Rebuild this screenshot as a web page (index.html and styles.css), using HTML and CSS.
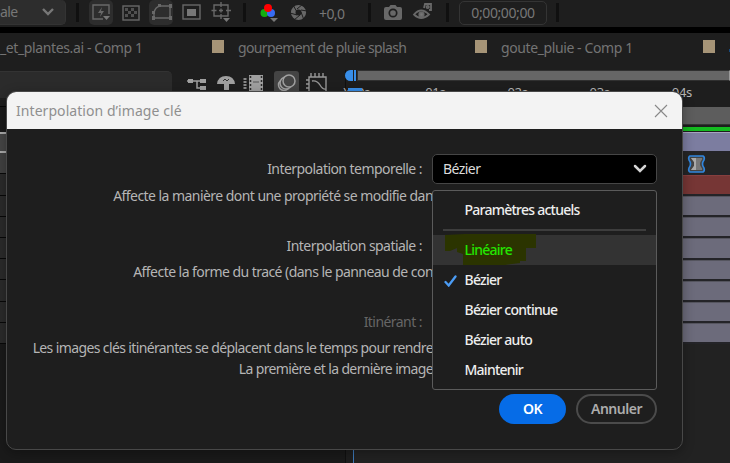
FILE: index.html
```html
<!DOCTYPE html>
<html lang="fr">
<head>
<meta charset="utf-8">
<title>Interpolation d’image clé</title>
<link rel="stylesheet" href="styles.css">
</head>
<body>
<div class="app">
  <header class="toolbar">
    <div class="zoom-select"><span>ale</span>
      <svg width="14" height="10" viewBox="0 0 14 10"><path d="M2 2l5 5 5-5" fill="none" stroke="#777" stroke-width="2.4"/></svg>
    </div>
    <i class="sep s1"></i>
    <svg class="tools" width="150" height="27" viewBox="0 0 150 27" fill="none" stroke="#686868" stroke-width="1.4">
      <rect x="1" y="0" width="24" height="25" rx="5" fill="#2d2d2d" stroke="none"/>
      <path d="M21 14V5H5v14h10"/><path d="M14 7l-4 6h3l-1 4 4-6h-3z" fill="#686868" stroke="none"/><path d="M15 16h7l-3.5 4z" fill="#777" stroke="none"/>
      <rect x="35" y="6" width="16" height="14"/>
      <path d="M37 8h3v3h-3zM43 8h3v3h-3zM40 11h3v3h-3zM46 11h3v3h-3zM37 14h3v3h-3zM43 14h3v3h-3z" fill="#505050" stroke="none"/>
      <rect x="61" y="0" width="24" height="25" rx="5" fill="#2d2d2d" stroke="none"/>
      <path d="M66 18v-5q1-6 6-7h10v12z"/><path d="M64 16h3v4h-3zM81 16h3v4h-3zM81 4h3v4h-3zM70 4h3v3h-3zM64 11h3v3h-3z" fill="#686868" stroke="none"/>
      <rect x="95" y="5" width="17" height="14"/><rect x="99" y="9" width="9" height="7" fill="#777" stroke="none"/>
      <path d="M126 5h14v11h-14zM133 2v5M133 14v5M123.500 10.500h5M138 10.500h5M131 10.500h4M133 8.500v4"/><path d="M135 18h7l-3.500 4z" fill="#777" stroke="none"/>
    </svg>
    <i class="sep s2"></i>
    <svg class="rgb" width="52" height="26" viewBox="0 0 52 26">
      <circle cx="4.500" cy="13" r="4" fill="#12ad12"/><circle cx="11" cy="13" r="4" fill="#376cf3"/><circle cx="8" cy="8" r="4" fill="#f00"/><path d="M10 18h8l-4 4z" fill="#777"/>
      <g fill="none" stroke="#686868"><circle cx="38.500" cy="12.500" r="5.300" stroke-width="4.600"/><path d="M33 5l4 7M43 4l-6 5M47 11l-6-1M44 20l-3-8M34 20l6-5M30 13l7 2" stroke="#1e1e1e" stroke-width="1"/></g>
    </svg>
    <span class="exposure">+0,0</span>
    <i class="sep s3"></i>
    <svg class="cams" width="50" height="24" viewBox="0 0 50 24">
      <path d="M1 7q0-2 2-2h3l1.500-2h5L14 5h3q2 0 2 2v9q0 2-2 2H3q-2 0-2-2z" fill="#686868"/><circle cx="10" cy="11" r="3.700" fill="#686868" stroke="#1e1e1e" stroke-width="1.700"/>
      <g fill="none" stroke="#686868" stroke-width="1.800"><path d="M31 12.500q7-8 15 0-8 7-15 0z"/><circle cx="38.500" cy="12.500" r="2.200" fill="#777"/><path d="M41 6l1-4h6v6h-2"/><circle cx="44.700" cy="5" r="1.200"/></g>
    </svg>
    <i class="sep s4"></i>
    <div class="timecode">0;00;00;00</div>
    <i class="sep s5"></i>
  </header>
  <nav class="tabs">
    <span class="tab t1">_et_plantes.ai - Comp 1</span><i class="swatch"></i>
    <span class="tab t2">gourpement de pluie splash</span><i class="swatch"></i>
    <span class="tab t3">goute_pluie - Comp 1</span><i class="swatch"></i><i class="tick"></i>
  </nav>
  <main class="timeline">
    <section class="layers">
      <div class="layer-tools">
        <div class="search"></div>
        <svg width="146" height="30" viewBox="0 0 146 30">
          <g fill="none" stroke="#a0a0a0" stroke-width="1.500"><path d="M4 11h17M14 11v7h7"/><path d="M5 11h5M17 11h6M17 18h6" stroke-width="4"/></g>
          <path d="M34 14q1-8 9-8t9 8h-6v6h-5v-6z" fill="#a0a0a0"/><path d="M40 11l2-2 2 2 2-2" stroke="#333" fill="none"/>
          <path d="M66 5h14v16H66z" fill="#a0a0a0"/><path d="M67.500 6v15M78.500 6v15" stroke="#2b2b2b" stroke-width="1.500" stroke-dasharray="2 2"/><path d="M70 12h6" stroke="#555"/><path d="M62 8v12" stroke="#888" stroke-width="3" stroke-dasharray="2 1"/>
          <rect x="91" y="1" width="25" height="24" rx="3" fill="#444"/><g fill="#444" stroke="#a0a0a0" stroke-width="1.500"><circle cx="101" cy="15" r="5.500"/><circle cx="103" cy="13" r="6"/><circle cx="106" cy="11" r="6"/></g>
          <path d="M126 21V7h17v14M129 11q5-1 8 4t6 4M128 3v4M132 3v4M136 3v4M140 3v4M123 10h3M123 14h3M123 18h3" fill="none" stroke="#969696" stroke-width="1.400"/>
        </svg>
      </div>
      <div class="layer-head"></div>
      <div class="rows left"><i></i><i></i><i></i><i></i><i></i><i></i><i></i><i></i><i></i><i></i></div>
    </section>
    <section class="tracks">
      <div class="navigator"><i class="nav-start"></i><i class="nav-line"></i><i class="nav-bar"></i></div>
      <div class="ruler"><span>):00s</span><span>01s</span><span>02s</span><span>03s</span><span>04s</span><i class="playhead"></i></div>
      <div class="work-area"></div>
      <div class="cache"></div>
      <div class="rows right"><i></i><i class="keys"><svg width="19" height="18" viewBox="0 0 19 18"><path d="M3 1h13q2 1 1 4-3 4 0 8 1 3-1 4H3q-2-1-1-4 3-4 0-8-1-3 1-4z" fill="#444" stroke="#3186df" stroke-width="1.600"/><path d="M4 3h11q1 1-1 3-2 3 0 6 2 2 1 3H4l3-4V7z" fill="#777"/><path d="M4 3h5v12H4l3-4V7z" fill="#aaa"/></svg></i><i></i><i></i><i></i><i></i><i></i><i></i><i></i><i></i></div>
      <div class="empty"></div>
    </section>
  </main>
</div>

<div class="dialog">
  <header class="titlebar"><span>Interpolation d’image clé</span>
    <svg width="14" height="14" viewBox="0 0 14 14"><path d="M1 1l12 12M13 1L1 13" stroke="#888" stroke-width="1.100"/></svg>
  </header>
  <div class="form">
    <div class="field"><label>Interpolation temporelle :</label>
      <div class="select"><span>Bézier</span><svg width="14" height="10" viewBox="0 0 14 10"><path d="M2 2l5 5 5-5" fill="none" stroke="#d5d5d5" stroke-width="2.500" stroke-linecap="round"/></svg></div>
    </div>
    <p class="d1">Affecte la manière dont une propriété se modifie dan</p>
    <div class="field second"><label class="l2">Interpolation spatiale :</label></div>
    <p class="d2">Affecte la forme du tracé (dans le panneau de con</p>
    <div class="field third"><label class="off">Itinérant :</label></div>
    <p class="d3">Les images clés itinérantes se déplacent dans le temps pour rendre</p>
    <p class="d4">La première et la dernière image</p>
  </div>
  <footer class="actions"><button class="ok">OK</button><button class="cancel">Annuler</button></footer>
  <div class="menu">
    <div class="item first">Paramètres actuels</div>
    <hr>
    <div class="item hover"><svg class="marker" width="91" height="31" viewBox="0 0 91 31"><path d="M0 1L20 0H91V14H81V27H75V29L60 31H18V20L12 18V14L5 17H0z" fill="#2b3400"/></svg><span>Linéaire</span></div>
    <div class="item"><svg class="check" width="13" height="12" viewBox="0 0 13 12"><path d="M1.500 7l3.200 3.500L11.500 1.500" fill="none" stroke="#4b9cf5" stroke-width="2.300" stroke-linecap="round"/></svg>Bézier</div>
    <div class="item cont">Bézier continue</div>
    <div class="item auto">Bézier auto</div>
    <div class="item keep">Maintenir</div>
  </div>
</div>
</body>
</html>
```
FILE: styles.css
```css
* { box-sizing: border-box; }
body { margin: 0; width: 730px; height: 463px; overflow: hidden; position: relative; background: #1e1e1e; font: 14px/20px "Noto Sans", sans-serif; letter-spacing: -0.55px; }
svg { display: block; flex: none; }
i { display: block; flex: none; }
.app { height: 463px; display: flex; flex-direction: column; }
.toolbar { height: 33px; flex: none; display: flex; border-bottom: 6px solid #000; color: #777; }
.zoom-select { width: 66px; height: 25px; background: #2d2d2d; border-radius: 0 5px 5px 0; display: flex; align-items: center; justify-content: space-between; padding-right: 10px; flex: none; border: 1px solid #333; border-width: 0 1px 1px 0; }
.sep { width: 3px; height: 19px; margin-top: 3px; background: #101010; }
.s1 { margin-left: 10px; }
.tools { margin-left: 9px; }
.s2 { margin-left: 5px; }
.rgb { margin-left: 14px; }
.exposure { margin-left: 7px; width: 27px; line-height: 28px; white-space: nowrap; letter-spacing: -0.6px; }
.s3 { margin-left: 22px; }
.cams { margin-left: 12px; margin-top: 2px; }
.s4 { margin-left: 13px; }
.timecode { margin-left: 10px; width: 88px; height: 24px; margin-top: 1px; border: 1px solid #343434; border-radius: 5px; text-align: center; line-height: 22px; letter-spacing: -0.4px; flex: none; }
.s5 { margin-left: 9px; }
.tabs { height: 37px; flex: none; display: flex; align-items: flex-start; color: #747474; padding-top: 5px; }
.tab { white-space: nowrap; flex: none; }
.swatch { width: 12px; height: 13px; margin-top: 2px; background: #a69477; }
.t1 { width: 212px; letter-spacing: -.38px; }
.t2 { width: 245px; padding-left: 8px; margin-left: 6px; letter-spacing: -.63px; }
.t3 { width: 202px; margin-left: 14px; letter-spacing: -.4px; }
.tick { width: 1px; height: 3px; margin: 11px 0 0 14px; background: #174a80; }
.timeline { flex: 1; display: flex; background: #1e1e1e; }
.layers { width: 345px; background: #1a1a1a; flex: none; }
.layer-tools { height: 37px; display: flex; border-bottom: 1px solid #060606; background: #1e1e1e; }
.search { width: 172px; height: 27px; margin: 1px 11px 0 0; background: #2b2b2b; border-radius: 0 5px 0 0; border-top: 1px solid #333; }
.layer-head { height: 25px; }
.rows { height: 212px; display: grid; grid-template-rows: repeat(10, 1fr); }
.left i { background: #2b2b2b; border-bottom: 1px solid #080808; }
.left i:nth-child(1) { background: #464646; border-top: 2px solid #aaa; border-bottom: 2px solid #aaa; }
.left i:nth-child(2) { background: #414141; }
.tracks { flex: 1; position: relative; padding-left: 8px; border-left: 1px solid #101010; }
.navigator { height: 12px; display: flex; margin-left: -9px; width: 385px; }
.nav-start { width: 8px; height: 11px; background: #388ee9; border-radius: 6px 0 0 6px; }
.nav-line { width: 2px; height: 11px; margin: 0 1px; background: #388ee9; }
.nav-bar { width: 373px; height: 11px; background: #666; border: 1px solid #303030; border-right-color: #999; }
.ruler { position: relative; display: grid; grid-template-columns: repeat(5, 82.2px); height: 25px; width: 386px; margin-left: -11px; color: #b8b8b8; font-size: 13px; letter-spacing: -.3px; }
.ruler span { white-space: nowrap; }
.playhead { position: absolute; left: 5px; top: 6px; width: 14px; height: 15px; background: #388ee9; }
.work-area { height: 18px; background: #5d5d5d; border-bottom: 1px solid #333; }
.cache { height: 4px; margin: 2px 0 1px; background: #14bb20; }
.right { margin-left: -8px; }
.right i { background: #6c6b7b; border-bottom: 2px solid #242428; border-top: 1px solid #55555f; }
.right i:nth-child(1) { background: #7c7da0; border-top-color: #a5a6c0; }
.right .keys { background: #252525; border-top: 0; padding: 2px 0 0 341px; }
.right i:nth-child(3) { background: #763635; border-top-color: #873f3e; }
.empty { height: 119px; background: #222; border-left: 1px solid #3d78b8; margin-left: -1px; }
.dialog { position: absolute; left: 6px; top: 91px; width: 677px; height: 359px; border: 1px solid #484848; border-radius: 10px; background: #1e1e1e; box-shadow: 0 3px 12px rgba(0,0,0,.3); color: #b5b5b5; }
.titlebar { height: 37px; background: #f3f3f3; border-radius: 9px 9px 0 0; display: flex; justify-content: space-between; align-items: center; padding: 0 14px 0 9px; color: #8f8f8f; font-size: 14px; letter-spacing: .06px; }
.form { width: 650px; padding-top: 25px; }
.field { height: 30px; display: flex; align-items: center; }
.field label { width: 415px; text-align: right; white-space: nowrap; }
.select { width: 225px; height: 30px; margin-left: 10px; padding: 0 9px 0 10px; border: 1px solid #464646; border-radius: 5px; background: #000; display: flex; align-items: center; justify-content: space-between; color: #ddd; }
.form p { margin: 0; width: 426px; line-height: 20px; text-align: right; white-space: nowrap; }
.form .d1 { margin-top: 2px; }
.second { margin-top: 25px; }
.form .d2 { margin-top: 1px; }
.third { margin-top: 25px; }
.off { color: #666; }
.form .d3 { margin-top: 1px; letter-spacing: -.62px; }
.form .d4 { margin-top: 1px; letter-spacing: -.64px; }
.actions { display: flex; gap: 10px; justify-content: flex-end; padding-right: 25px; margin-top: 15px; }
button { height: 30px; border: 0; border-radius: 15px; padding: 0; font: 600 14px/20px "Noto Sans", sans-serif; }
.ok { width: 67px; background: #066ce7; color: #fff; letter-spacing: -.5px; }
.cancel { width: 81px; border: 2px solid #4b4b4b; background: #1e1e1e; color: #acacac; letter-spacing: -.5px; }
.menu { position: absolute; left: 425px; top: 98px; width: 225px; height: 200px; border: 1px solid #5b5b5b; border-radius: 3px; background: #1e1e1e; color: #eee; padding-top: 4px; font-weight: 500; letter-spacing: -.75px; }
.item { height: 30px; display: flex; align-items: center; padding-left: 31.500px; position: relative; }
hr { margin: 4px 10px; height: 2px; border: 0; background: #3d3d3d; }
.hover { background: #333; color: #24e600; }
.hover span { position: relative; }
.marker { position: absolute; left: 12px; top: -1px; }
.check { position: absolute; left: 11px; top: 10px; }
```
